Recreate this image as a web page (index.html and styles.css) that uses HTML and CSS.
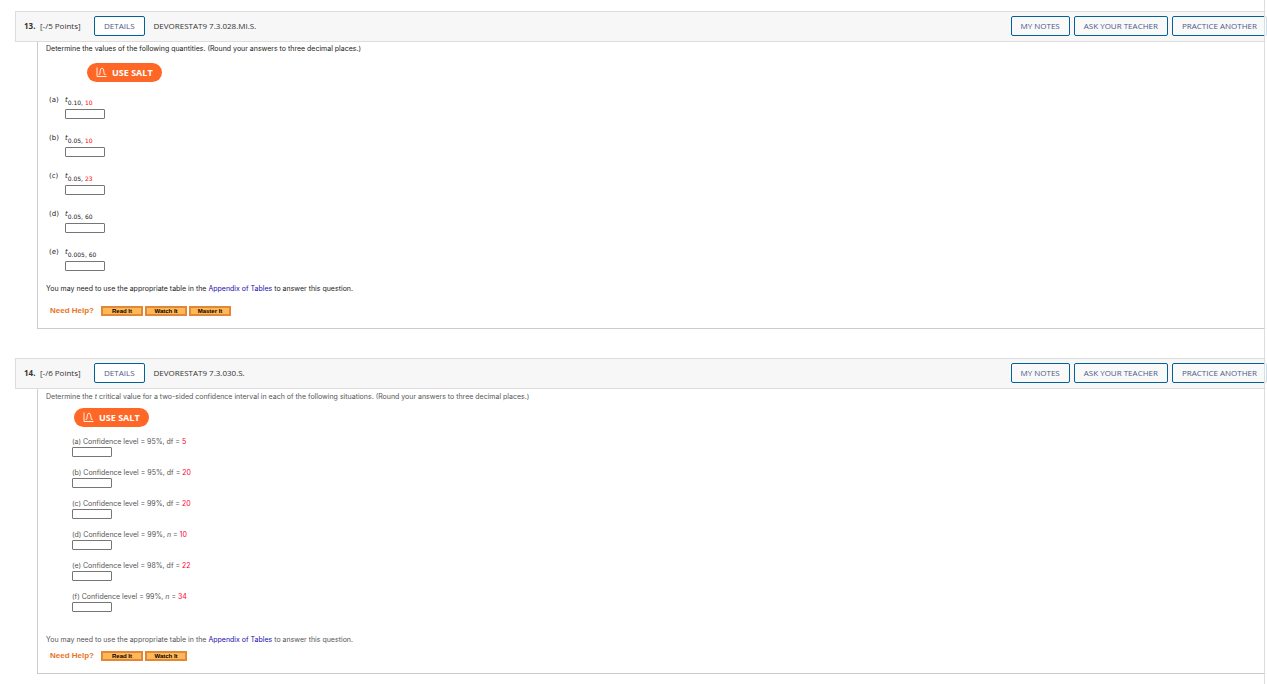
FILE: index.html
```html
<!DOCTYPE html>
<html lang="en">
<head>
  <meta charset="UTF-8">
  <title>Homework</title>
  <link rel="stylesheet" href="styles.css">
</head>
<body>

<main>
  <section class="question">
    <header class="question-header">
      <h2>13.</h2>
      <span class="points">[-/5 Points]</span>
      <button type="button" class="btn">DETAILS</button>
      <span class="question-id">DEVORESTAT9 7.3.028.MI.S.</span>
      <div class="actions">
        <button type="button" class="btn">MY NOTES</button>
        <button type="button" class="btn">ASK YOUR TEACHER</button>
        <button type="button" class="btn">PRACTICE ANOTHER</button>
      </div>
    </header>

    <div class="question-body">
      <p>Determine the values of the following quantities. (Round your answers to three decimal places.)</p>
      <button type="button" class="salt">
        <svg width="11" height="11" viewBox="0 0 11 11" fill="none" stroke="#fff" aria-hidden="true">
          <path d="M1 0.5V9.5H10.5" stroke-width="0.9"/>
          <path d="M2.6 7.5H3.4C4.4 7.5 3.6 1.2 6 1.2S7.6 7.5 8.6 7.5H9.6" stroke-width="1"/>
        </svg>
        USE SALT
      </button>

      <ol class="parts">
        <li>
          <span class="letter">(a)</span>
          <label for="q13a"><i>t</i><sub>0.10, <b>10</b></sub></label>
          <input type="text" id="q13a">
        </li>
        <li>
          <span class="letter">(b)</span>
          <label for="q13b"><i>t</i><sub>0.05, <b>10</b></sub></label>
          <input type="text" id="q13b">
        </li>
        <li>
          <span class="letter">(c)</span>
          <label for="q13c"><i>t</i><sub>0.05, <b>23</b></sub></label>
          <input type="text" id="q13c">
        </li>
        <li>
          <span class="letter">(d)</span>
          <label for="q13d"><i>t</i><sub>0.05, 60</sub></label>
          <input type="text" id="q13d">
        </li>
        <li>
          <span class="letter">(e)</span>
          <label for="q13e"><i>t</i><sub>0.005, 60</sub></label>
          <input type="text" id="q13e">
        </li>
      </ol>

      <p>You may need to use the appropriate table in the <a href="#">Appendix of Tables</a> to answer this question.</p>

      <div class="help">
        <span>Need Help?</span>
        <button type="button">Read It</button>
        <button type="button">Watch It</button>
        <button type="button">Master It</button>
      </div>
    </div>
  </section>

  <section class="question levels">
    <header class="question-header">
      <h2>14.</h2>
      <span class="points">[-/6 Points]</span>
      <button type="button" class="btn">DETAILS</button>
      <span class="question-id">DEVORESTAT9 7.3.030.S.</span>
      <div class="actions">
        <button type="button" class="btn">MY NOTES</button>
        <button type="button" class="btn">ASK YOUR TEACHER</button>
        <button type="button" class="btn">PRACTICE ANOTHER</button>
      </div>
    </header>

    <div class="question-body">
      <p>Determine the <i>t</i> critical value for a two-sided confidence interval in each of the following situations. (Round your answers to three decimal places.)</p>
      <button type="button" class="salt">
        <svg width="11" height="11" viewBox="0 0 11 11" fill="none" stroke="#fff" aria-hidden="true">
          <path d="M1 0.5V9.5H10.5" stroke-width="0.9"/>
          <path d="M2.6 7.5H3.4C4.4 7.5 3.6 1.2 6 1.2S7.6 7.5 8.6 7.5H9.6" stroke-width="1"/>
        </svg>
        USE SALT
      </button>

      <ol class="level-list">
        <li>
          <label for="q14a">(a) Confidence level = 95%, df = <b>5</b></label>
          <input type="text" id="q14a">
        </li>
        <li>
          <label for="q14b">(b) Confidence level = 95%, df = <b>20</b></label>
          <input type="text" id="q14b">
        </li>
        <li>
          <label for="q14c">(c) Confidence level = 99%, df = <b>20</b></label>
          <input type="text" id="q14c">
        </li>
        <li>
          <label for="q14d">(d) Confidence level = 99%, <i>n</i> = <b>10</b></label>
          <input type="text" id="q14d">
        </li>
        <li>
          <label for="q14e">(e) Confidence level = 98%, df = <b>22</b></label>
          <input type="text" id="q14e">
        </li>
        <li>
          <label for="q14f">(f) Confidence level = 99%, <i>n</i> = <b>34</b></label>
          <input type="text" id="q14f">
        </li>
      </ol>

      <p>You may need to use the appropriate table in the <a href="#">Appendix of Tables</a> to answer this question.</p>

      <div class="help">
        <span>Need Help?</span>
        <button type="button">Read It</button>
        <button type="button">Watch It</button>
      </div>
    </div>
  </section>
</main>

<aside class="drawer"></aside>

</body>
</html>
```
FILE: styles.css
```css
* {
  box-sizing: border-box;
}

body {
  margin: 0;
  background: #fff;
  color: #222;
  font-family: Inter, Verdana, sans-serif;
  font-size: 7px;
  line-height: 10px;
}

main {
  padding: 11px 0 0 15px;
}

p, h2, ol {
  margin: 0;
  padding: 0;
}

ol {
  list-style: none;
}

button {
  font-family: "Open Sans", sans-serif;
  cursor: pointer;
}

.question + .question {
  margin-top: 29px;
}

/* header bar */
.question-header {
  display: flex;
  align-items: center;
  height: 31px;
  padding: 0 0 2px 8px;
  background: #f7f7f7;
  border: 1px solid #ddd;
  border-right: none;
  color: #333;
  font-family: "Open Sans", sans-serif;
  font-size: 8px;
}

.question-header h2 {
  width: 16px;
  font-size: 8px;
}

.points {
  width: 54px;
  white-space: nowrap;
}

.btn {
  height: 20px;
  padding: 0 9px;
  background: #fff;
  border: 1px solid #006298;
  border-radius: 2px;
  color: #4a5a8c;
  font-size: 8px;
  line-height: 18px;
  white-space: nowrap;
}

.actions .btn {
  background: #f9f9f9;
}

.question-id {
  margin-left: 9px;
}

.actions {
  display: flex;
  gap: 4px;
  margin-left: auto;
}

/* question content */
.question-body {
  display: flow-root;
  margin-left: 22px;
  padding: 2px 0 12px 8px;
  border-left: 1px solid #ccc;
  border-bottom: 1px solid #ccc;
}

.salt {
  display: flex;
  align-items: center;
  gap: 5px;
  height: 19px;
  margin: 9px 0 0 41px;
  padding: 0 9px;
  background: #ff6726;
  border: none;
  border-radius: 10px;
  color: #fff;
  font-size: 9px;
  font-weight: bold;
}

input {
  display: block;
  width: 40px;
  height: 10px;
  padding: 0 2px;
  border: 1px solid #767676;
  border-radius: 1px;
  font-size: 7px;
}

b {
  color: #f00;
  font-weight: normal;
}

a {
  color: #1a0dab;
  text-decoration: none;
}

.parts {
  display: grid;
  gap: 14px;
  margin: 13px 0 13px 3px;
  font-family: Verdana, "DejaVu Sans", sans-serif;
}

.parts li {
  display: grid;
  grid-template-columns: 16px 1fr;
  grid-template-rows: 14px 10px;
}

.parts input {
  grid-column: 2;
}

.parts sub {
  font-size: 6px;
  line-height: 1;
  vertical-align: -3px;
}

.help {
  display: flex;
  align-items: center;
  gap: 2px;
  margin: 12px 0 0 4px;
}

.help span {
  margin-right: 5px;
  color: #e77422;
  font-family: Arial, "Liberation Sans", sans-serif;
  font-size: 8px;
  font-weight: bold;
}

.help button {
  width: 42px;
  height: 10px;
  padding: 0;
  background: #ffb855;
  border: 2px solid #e0873a;
  color: #000;
  font-family: Arial, "Liberation Sans", sans-serif;
  font-size: 6px;
  font-weight: bold;
  line-height: 6px;
}

/* confidence level question */
.levels .question-body {
  padding-top: 3px;
  color: #555;
}

.levels .salt {
  margin: 6px 0 0 28px;
}

.level-list {
  display: grid;
  gap: 11px;
  margin: 10px 0 23px 26px;
}

.level-list b {
  color: #f03;
}

.levels .help {
  margin-top: 6px;
}

/* collapsed side drawer */
.drawer {
  position: fixed;
  top: 0;
  right: 0;
  bottom: 0;
  width: 3px;
  background: rgba(255, 255, 255, 0.8);
  border-left: 1px solid #ddd;
}
```
